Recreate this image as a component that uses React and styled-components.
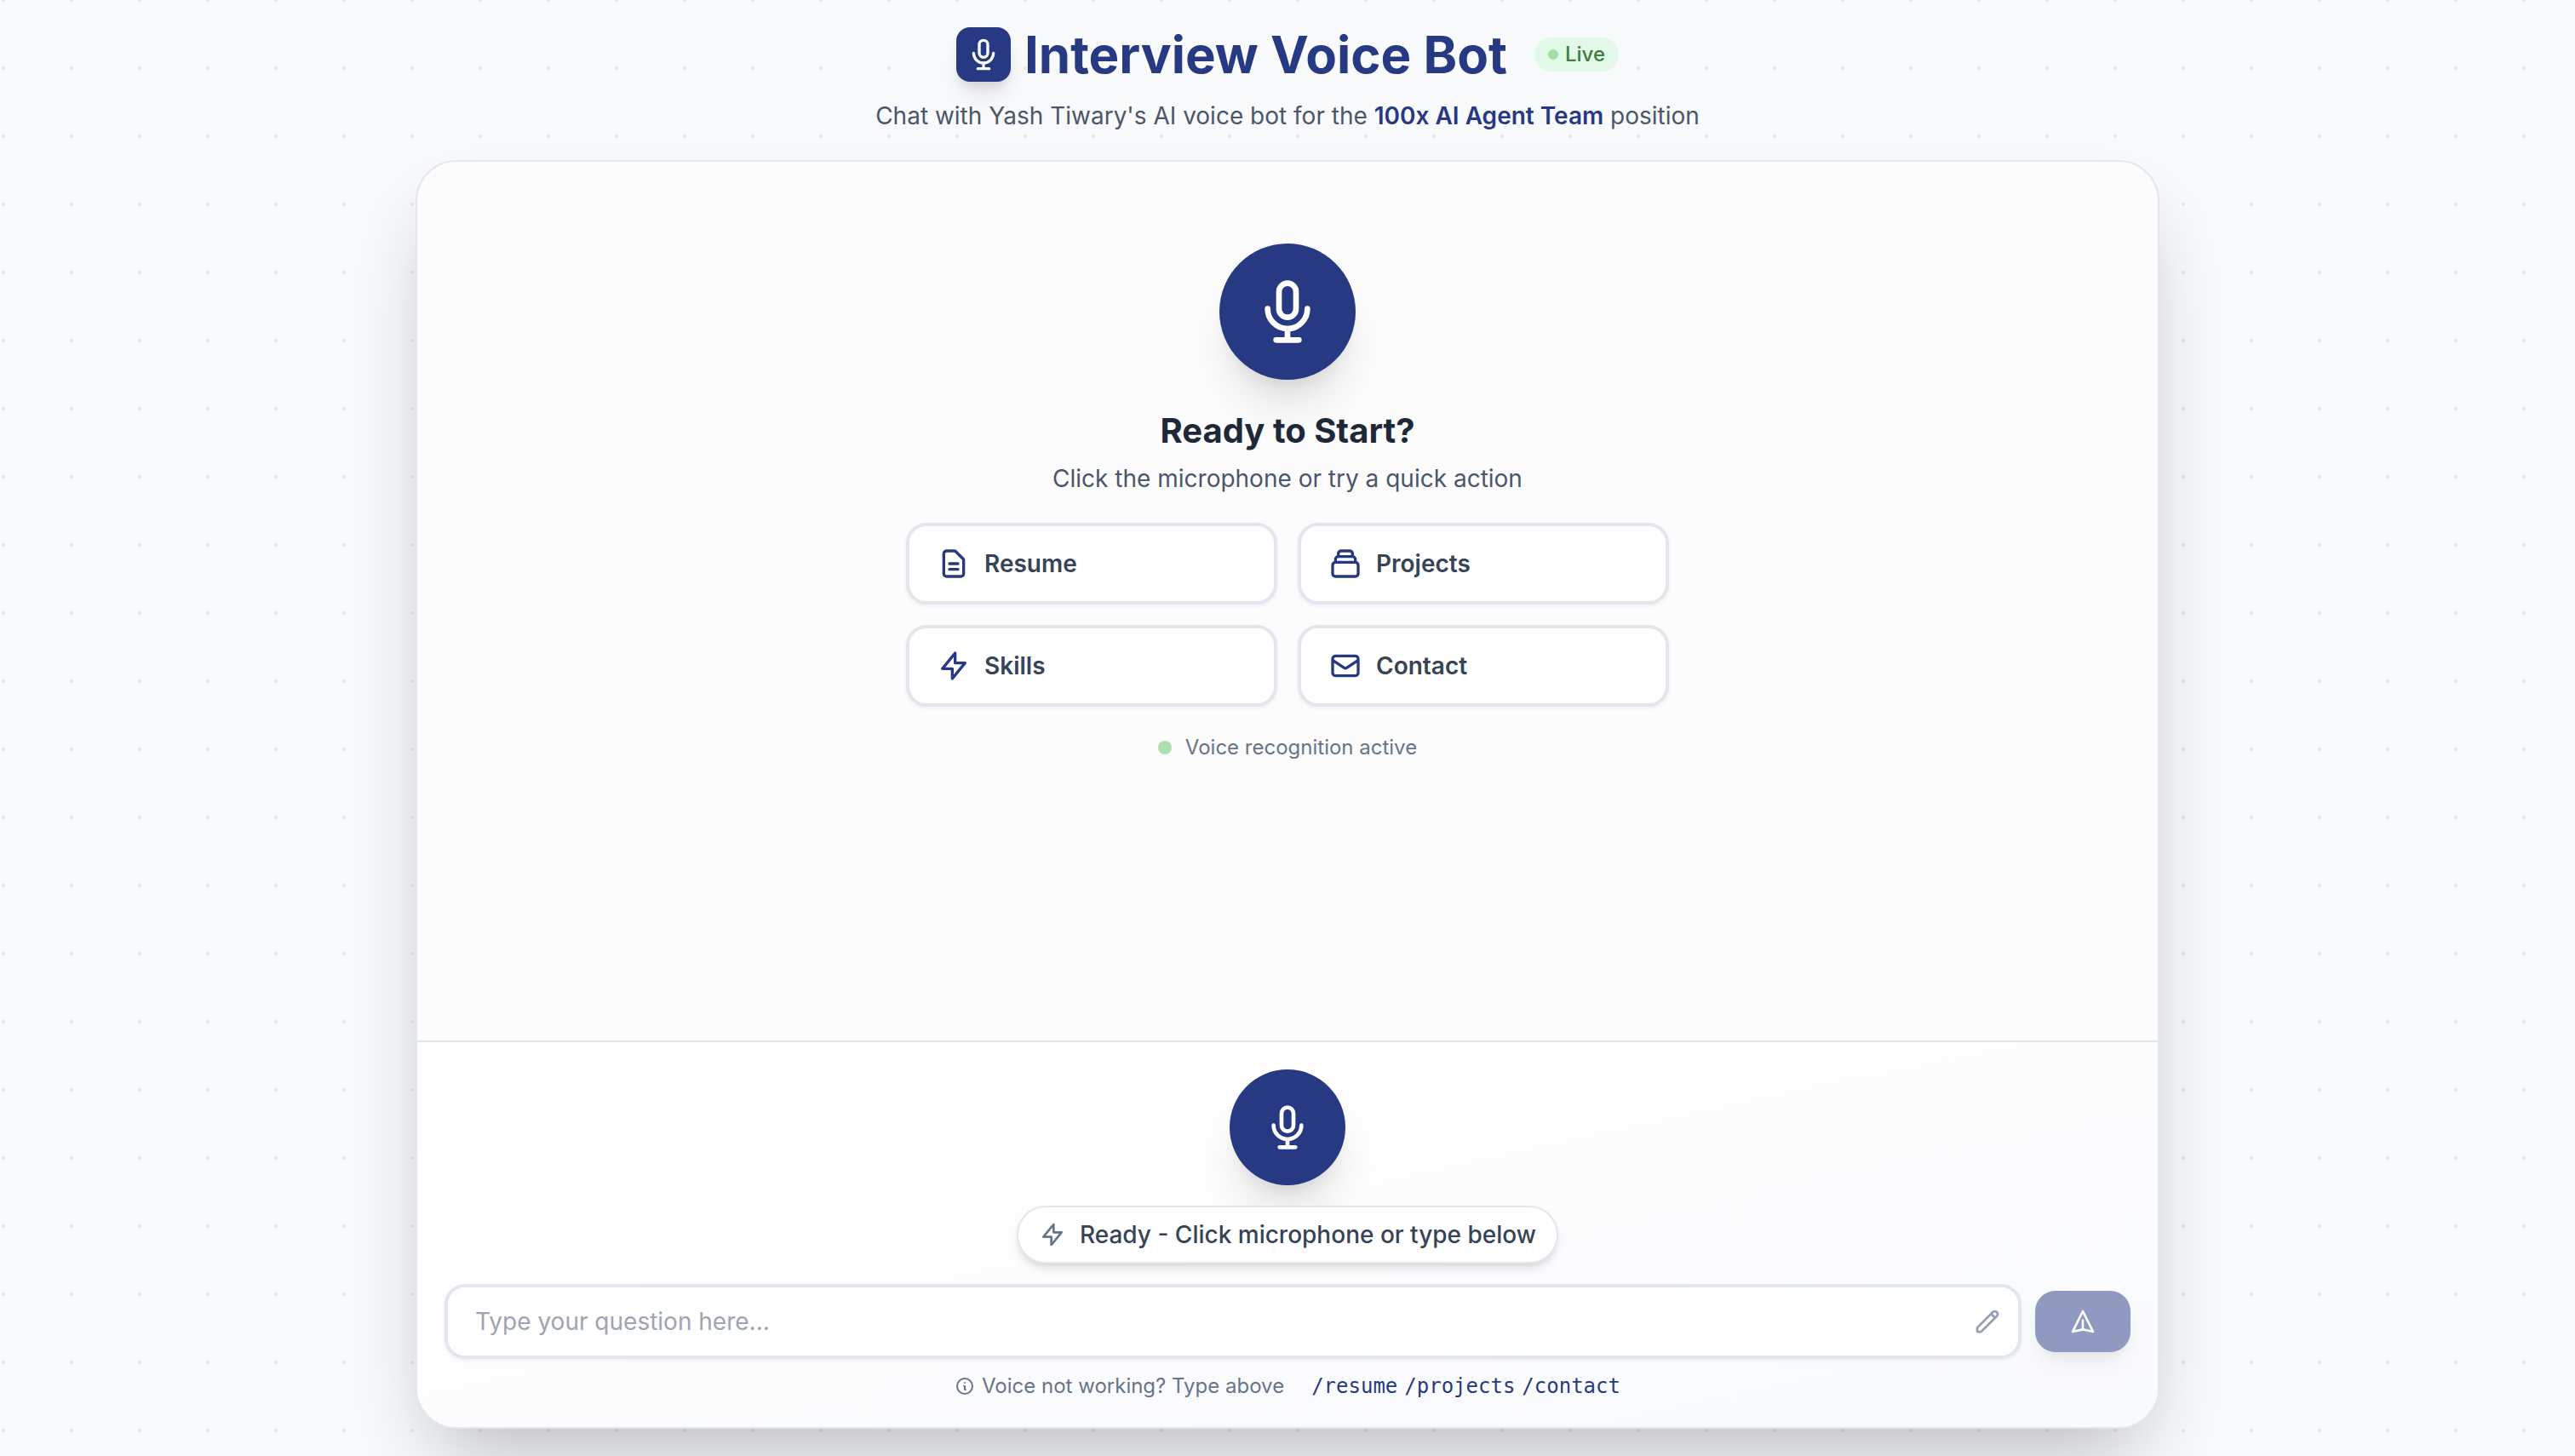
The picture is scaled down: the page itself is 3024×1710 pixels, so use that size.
import React, { useState } from 'react';
import styled, { createGlobalStyle, css } from 'styled-components';

const color = {
  navy: '#263982',
  ink: '#1f2839',
  slate: '#374356',
  muted: '#4b566a',
  soft: '#667489',
  line: '#e2e7ee',
};

const GlobalStyle = createGlobalStyle`
  *, *::before, *::after { box-sizing: border-box; }
  body {
    margin: 0;
    font-family: Inter, "Liberation Sans", sans-serif;
    background-color: #f9fafc;
    -webkit-font-smoothing: antialiased;
  }
  h1, h2, p { margin: 0; }
  button, input { font: inherit; }
`;

const paths = {
  mic: 'M19 11a7 7 0 01-7 7m0 0a7 7 0 01-7-7m7 7v4m0 0H8m4 0h4m-4-8a3 3 0 01-3-3V5a3 3 0 116 0v6a3 3 0 01-3 3z',
  document:
    'M9 12h6m-6 4h6m2 5H7a2 2 0 01-2-2V5a2 2 0 012-2h5.586a1 1 0 01.707.293l5.414 5.414a1 1 0 01.293.707V19a2 2 0 01-2 2z',
  collection:
    'M19 11H5m14 0a2 2 0 012 2v6a2 2 0 01-2 2H5a2 2 0 01-2-2v-6a2 2 0 012-2m14 0V9a2 2 0 00-2-2M5 11V9a2 2 0 012-2m0 0V5a2 2 0 012-2h6a2 2 0 012 2v2M7 7h10',
  bolt: 'M13 10V3L4 14h7v7l9-11h-7z',
  mail: 'M3 8l7.89 5.26a2 2 0 002.22 0L21 8M5 19h14a2 2 0 002-2V7a2 2 0 00-2-2H5a2 2 0 00-2 2v10a2 2 0 002 2z',
  pencil:
    'M15.232 5.232l3.536 3.536m-2.036-5.036a2.5 2.5 0 113.536 3.536L6.5 21.036H3v-3.572L16.732 3.732z',
  send: 'M12 19l9 2-9-18-9 18 9-2zm0 0v-8',
  info: 'M13 16h-1v-4h-1m1-4h.01M21 12a9 9 0 11-18 0 9 9 0 0118 0z',
};

const Svg = styled.svg`
  display: block;
  flex: none;
  width: ${(p) => p.$size}px;
  height: ${(p) => p.$size}px;
  fill: none;
  stroke: currentColor;
  stroke-width: 2;
  stroke-linecap: round;
  stroke-linejoin: round;
`;

const Icon = ({ name, size }) => (
  <Svg viewBox="0 0 24 24" $size={size} aria-hidden="true">
    <path d={paths[name]} />
  </Svg>
);

const Page = styled.div`
  min-height: 100vh;
  padding: 32px;
  display: flex;
  flex-direction: column;
  align-items: center;
  gap: 32px;
  overflow: hidden;
  background-image: radial-gradient(circle at 40px 40px, #e6e7ea 2px, transparent 2px);
  background-size: 80px 80px;
  background-position: -36px -40px;
`;

const Header = styled.header`
  display: flex;
  flex-direction: column;
  align-items: center;
  gap: 20px;
`;

const Brand = styled.div`
  display: flex;
  align-items: center;
  gap: 16px;
`;

const Logo = styled.span`
  width: 64px;
  height: 64px;
  border-radius: 16px;
  display: grid;
  place-items: center;
  color: #fff;
  background: ${color.navy};
  box-shadow: 0 20px 30px -6px rgba(0, 0, 0, 0.1), 0 8px 12px -4px rgba(0, 0, 0, 0.1);
`;

const Title = styled.h1`
  font-size: 60px;
  line-height: 64px;
  font-weight: 700;
  color: ${color.navy};
`;

const LiveBadge = styled.span`
  display: flex;
  align-items: center;
  gap: 8px;
  height: 40px;
  margin-left: 16px;
  padding: 0 16px;
  border-radius: 20px;
  font-size: 24px;
  line-height: 32px;
  font-weight: 500;
  color: #3f7c45;
  background: #e2f9e7;
`;

const Dot = styled.span`
  width: ${(p) => p.$size}px;
  height: ${(p) => p.$size}px;
  border-radius: 50%;
  background: ${(p) => p.$tone};
`;

const bodyText = css`
  font-size: 28px;
  line-height: 40px;
`;

const Lead = styled.p`
  ${bodyText}
  color: ${color.muted};

  strong {
    font-weight: 600;
    color: ${color.navy};
  }
`;

const Card = styled.main`
  flex: 1;
  width: 100%;
  max-width: 2048px;
  display: flex;
  flex-direction: column;
  border: 2px solid ${color.line};
  border-radius: 48px;
  overflow: hidden;
  background: #fcfcfd;
  box-shadow: 0 50px 100px -24px rgba(0, 0, 0, 0.25);
`;

const Welcome = styled.section`
  flex: 1;
  display: flex;
  flex-direction: column;
  align-items: center;
  padding: 96px 32px 32px;
`;

const HeroMark = styled.div`
  width: 160px;
  height: 160px;
  margin-bottom: 32px;
  border-radius: 50%;
  display: grid;
  place-items: center;
  color: #fff;
  background: ${color.navy};
  box-shadow: 0 40px 50px -10px rgba(0, 0, 0, 0.1), 0 16px 20px -12px rgba(0, 0, 0, 0.1);
`;

const Heading = styled.h2`
  margin-bottom: 8px;
  font-size: 40px;
  line-height: 56px;
  font-weight: 700;
  color: ${color.ink};
`;

const Actions = styled.div`
  width: 100%;
  max-width: 896px;
  margin: 32px 0;
  display: grid;
  grid-template-columns: 1fr 1fr;
  gap: 24px;
`;

const ActionButton = styled.button`
  display: flex;
  align-items: center;
  gap: 16px;
  height: 96px;
  padding: 0 32px;
  border: 4px solid ${color.line};
  border-radius: 24px;
  background: #fff;
  box-shadow: 0 2px 4px rgba(0, 0, 0, 0.05);
  ${bodyText}
  font-weight: 600;
  color: ${color.slate};
  cursor: pointer;

  svg {
    color: ${color.navy};
  }
`;

const Recognition = styled.p`
  display: flex;
  align-items: center;
  gap: 16px;
  font-size: 24px;
  line-height: 32px;
  color: ${color.soft};
`;

const Composer = styled.section`
  display: flex;
  flex-direction: column;
  align-items: center;
  padding: 32px;
  border-top: 2px solid ${color.line};
  background: linear-gradient(to bottom right, #ffffff, #f9fafc);
`;

const MicButton = styled.button`
  width: 136px;
  height: 136px;
  padding: 0;
  border: 0;
  border-radius: 50%;
  display: grid;
  place-items: center;
  color: #fff;
  background: ${color.navy};
  box-shadow: 0 40px 50px -10px rgba(0, 0, 0, 0.1), 0 16px 20px -12px rgba(0, 0, 0, 0.1);
  cursor: pointer;
`;

const Status = styled.p`
  display: flex;
  align-items: center;
  gap: 16px;
  margin: 24px 0;
  padding: 12px 24px;
  border: 2px solid ${color.line};
  border-radius: 34px;
  background: #fff;
  box-shadow: 0 8px 12px -2px rgba(0, 0, 0, 0.1), 0 4px 8px -4px rgba(0, 0, 0, 0.1);
  ${bodyText}
  font-weight: 500;
  color: ${color.slate};

  svg {
    color: ${color.soft};
  }
`;

const Form = styled.form`
  width: 100%;
  display: flex;
  align-items: center;
  gap: 16px;
`;

const Field = styled.label`
  flex: 1;
  height: 88px;
  display: flex;
  align-items: center;
  gap: 16px;
  padding: 0 20px 0 32px;
  border: 4px solid ${color.line};
  border-radius: 24px;
  background: #fff;
  box-shadow: 0 2px 4px rgba(0, 0, 0, 0.05);
  color: #94a1b4;
`;

const Input = styled.input`
  flex: 1;
  min-width: 0;
  padding: 0;
  border: 0;
  outline: 0;
  background: transparent;
  ${bodyText}
  color: ${color.ink};

  &::placeholder {
    color: #9ea4b0;
    opacity: 1;
  }
`;

const SendButton = styled.button`
  width: 112px;
  height: 72px;
  padding: 0;
  border: 0;
  border-radius: 24px;
  display: grid;
  place-items: center;
  color: #fff;
  background: ${color.navy};
  box-shadow: 0 20px 30px -6px rgba(0, 0, 0, 0.1), 0 8px 12px -4px rgba(0, 0, 0, 0.1);

  &:disabled {
    opacity: 0.5;
  }
`;

const Hints = styled.div`
  display: flex;
  align-items: center;
  gap: 32px;
  margin-top: 16px;
  font-size: 24px;
  line-height: 32px;
  color: ${color.soft};
`;

const HintGroup = styled.span`
  display: flex;
  align-items: center;
  gap: 8px;
`;

const Command = styled.a`
  font-family: "DejaVu Sans Mono", monospace;
  color: ${color.navy};
  text-decoration: none;
`;

const actions = [
  { icon: 'document', label: 'Resume' },
  { icon: 'collection', label: 'Projects' },
  { icon: 'bolt', label: 'Skills' },
  { icon: 'mail', label: 'Contact' },
];

const commands = ['resume', 'projects', 'contact'];

export default function App() {
  const [question, setQuestion] = useState('');

  return (
    <Page>
      <GlobalStyle />
      <Header>
        <Brand>
          <Logo>
            <Icon name="mic" size={40} />
          </Logo>
          <Title>Interview Voice Bot</Title>
          <LiveBadge>
            <Dot $size={12} $tone="#a2dea9" />
            Live
          </LiveBadge>
        </Brand>
        <Lead>
          Chat with Yash Tiwary's AI voice bot for the <strong>100x AI Agent Team</strong> position
        </Lead>
      </Header>

      <Card>
        <Welcome>
          <HeroMark>
            <Icon name="mic" size={80} />
          </HeroMark>
          <Heading>Ready to Start?</Heading>
          <Lead>Click the microphone or try a quick action</Lead>
          <Actions>
            {actions.map(({ icon, label }) => (
              <ActionButton key={label} type="button">
                <Icon name={icon} size={40} />
                {label}
              </ActionButton>
            ))}
          </Actions>
          <Recognition>
            <Dot $size={16} $tone="#aedfb3" />
            Voice recognition active
          </Recognition>
        </Welcome>

        <Composer>
          <MicButton type="button" aria-label="Start recording">
            <Icon name="mic" size={56} />
          </MicButton>
          <Status>
            <Icon name="bolt" size={32} />
            Ready - Click microphone or type below
          </Status>
          <Form onSubmit={(event) => event.preventDefault()}>
            <Field>
              <Input
                type="text"
                aria-label="Your question"
                placeholder="Type your question here..."
                value={question}
                onChange={(event) => setQuestion(event.target.value)}
              />
              <Icon name="pencil" size={32} />
            </Field>
            <SendButton type="submit" aria-label="Send" disabled={!question.trim()}>
              <Icon name="send" size={32} />
            </SendButton>
          </Form>
          <Hints>
            <HintGroup>
              <Icon name="info" size={24} />
              Voice not working? Type above
            </HintGroup>
            <HintGroup>
              {commands.map((name) => (
                <Command key={name} href={`#${name}`}>
                  /{name}
                </Command>
              ))}
            </HintGroup>
          </Hints>
        </Composer>
      </Card>
    </Page>
  );
}
